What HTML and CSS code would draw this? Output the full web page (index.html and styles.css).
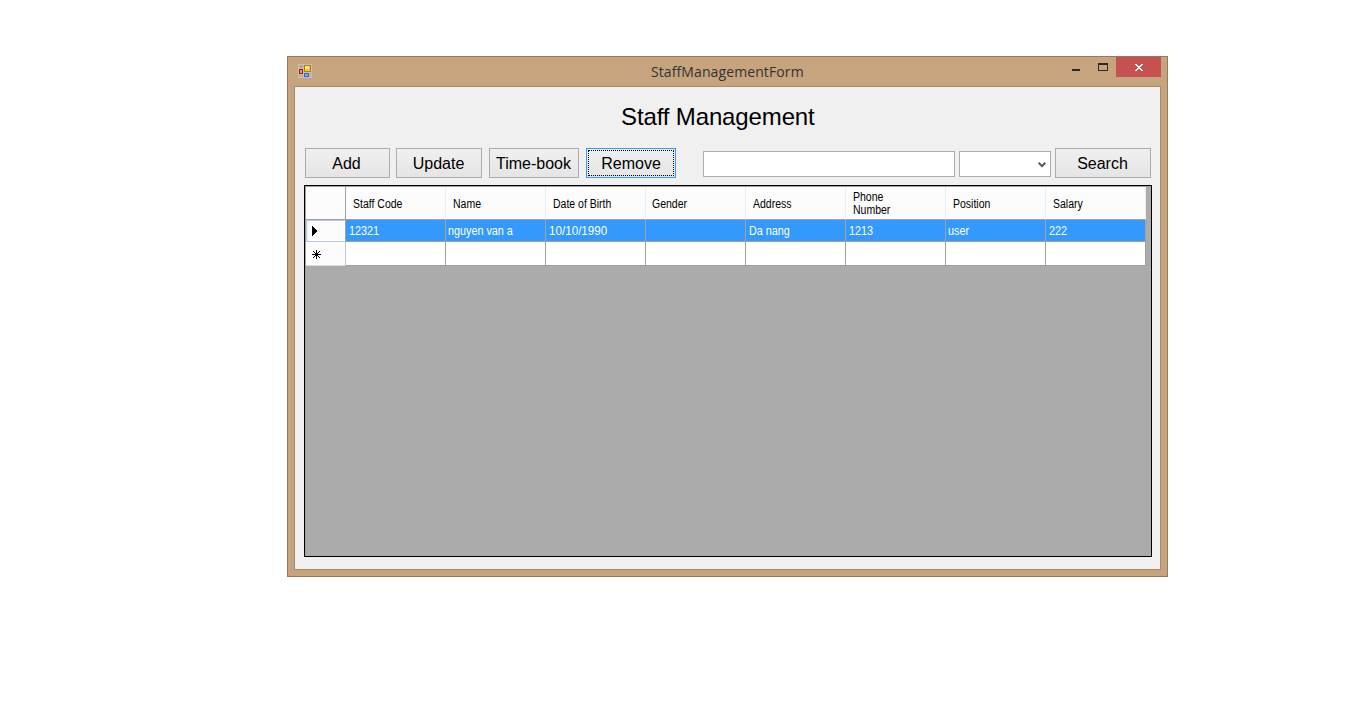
FILE: index.html
```html
<!DOCTYPE html>
<html lang="en">
<head>
<meta charset="utf-8">
<title>StaffManagementForm</title>
<link rel="stylesheet" href="styles.css">
</head>
<body>
<div class="window">
  <header class="titlebar">
    <svg class="app-icon" width="14" height="14" viewBox="0 0 14 14" shape-rendering="crispEdges">
      <path fill="#c0c0c0" fill-rule="evenodd" d="M0 0h14v14H0zM1 1v3h4V1zM1 11v2h2v-2zM4 11v2h1v-2zM12 9v4h1V9z"/>
      <path fill="#a01818" d="M1 5h4v5H1z"/><path fill="#e89088" d="M2 6h2v3H2z"/>
      <path fill="#b08008" d="M6 1h7v7H6z"/><path fill="#ffc820" d="M7 2h5v5H7z"/><path fill="#ffe880" d="M7 2h4v3H7z"/>
      <path fill="#3468c8" d="M6 9h5v4H6z"/><path fill="#78a8f0" d="M7 10h3v2H7z"/>
    </svg>
    <h1 class="caption">StaffManagementForm</h1>
    <div class="controls">
      <svg width="46" height="20" viewBox="0 0 46 20" shape-rendering="crispEdges"><path fill="#2a2a2a" d="M2 12h8v2H2z"/><path fill="#2a2a2a" fill-rule="evenodd" d="M28 6h10v8H28zM29 8v5h8V8z"/></svg>
      <svg class="close" width="45" height="20" viewBox="0 0 45 20" shape-rendering="crispEdges"><path fill="#fff" d="M19 7h2v1h1v1h2v-1h1v-1h2v1h-1v1h-1v1h-1v1h1v1h1v1h1v1h-2v-1h-1v-1h-2v1h-1v1h-2v-1h1v-1h1v-1h1v-1h-1v-1h-1v-1h-1z"/></svg>
    </div>
  </header>
  <main class="client">
    <h2 class="heading">Staff Management</h2>
    <div class="toolbar">
      <button class="btn add">Add</button>
      <button class="btn update">Update</button>
      <button class="btn timebook">Time-book</button>
      <button class="btn remove"><span class="focus">Remove</span></button>
      <input class="field" aria-label="Search text">
      <div class="combo"><svg width="8" height="6" viewBox="0 0 8 6"><path d="M.7.8 4 4.100 7.300.8" fill="none" stroke="#555" stroke-width="2"/></svg></div>
      <button class="btn search">Search</button>
    </div>
    <div class="grid">
      <div class="row head">
        <div class="marker"></div><div class="cell"><span>Staff Code</span></div><div class="cell"><span>Name</span></div><div class="cell"><span>Date of Birth</span></div><div class="cell shift"><span>Gender</span></div><div class="cell"><span>Address</span></div><div class="cell two-line"><span>Phone<br>Number</span></div><div class="cell"><span>Position</span></div><div class="cell"><span>Salary</span></div>
      </div>
      <div class="row selected">
        <div class="marker"><svg width="6" height="10" viewBox="0 0 6 10" shape-rendering="crispEdges"><path d="M0 0h1v1h1v1h1v1h1v1h1v2h-1v1h-1v1h-1v1h-1v1h-1z"/></svg></div><div class="cell"><span>12321</span></div><div class="cell shift"><span>nguyen van a</span></div><div class="cell"><span class="date">10/10/1990</span></div><div class="cell"></div><div class="cell"><span>Da nang</span></div><div class="cell"><span>1213</span></div><div class="cell shift"><span>user</span></div><div class="cell"><span>222</span></div>
      </div>
      <div class="row blank">
        <div class="marker"><svg width="9" height="9" viewBox="0 0 9 9" shape-rendering="crispEdges"><path d="M4 0h1v9h-1zM0 4h9v1H0zM1 1h1v1h-1zM2 2h1v1h-1zM3 3h3v3h-3zM6 2h1v1h-1zM7 1h1v1h-1zM2 6h1v1h-1zM1 7h1v1h-1zM6 6h1v1h-1zM7 7h1v1h-1z"/></svg></div><div class="cell"></div><div class="cell"></div><div class="cell"></div><div class="cell"></div><div class="cell"></div><div class="cell"></div><div class="cell"></div><div class="cell"></div>
      </div>
    </div>
  </main>
</div>
</body>
</html>
```
FILE: styles.css
```css
* { box-sizing: border-box; }
body { margin: 0; background: #fff; overflow: hidden; font-family: "Liberation Sans", Arial, sans-serif; color: #000; }
.window { width: 881px; height: 521px; margin: 56px 0 0 287px; padding: 0 6px 6px; background: #c5a47e; border: 1px solid #937a5b; }
.titlebar { display: flex; height: 29px; align-items: flex-start; }
.app-icon { margin: 7px 0 0 4px; flex: none; }
.caption { flex: 1; margin: 0; padding-left: 339px; font: 14px/29px "Open Sans", "Noto Sans", sans-serif; letter-spacing: .1px; color: #333; white-space: nowrap; }
.controls { display: flex; }
.controls svg { display: block; }
.controls .close { background: #c75050; }
.client { width: 867px; height: 484px; padding: 0 8px 0 9px; background: #f0f0f0; border: 1px solid #a98a66; }
.heading { margin: 0; height: 61px; padding: 15px 0 0 317px; font-weight: 400; font-size: 24px; line-height: 30px; letter-spacing: -.13px; white-space: nowrap; }
.toolbar { display: flex; height: 37px; padding-left: 1px; align-items: flex-start; }
.btn { height: 30px; padding: 2px 0 0; border: 1px solid #acacac; background: linear-gradient(#f0f0f0, #e5e5e5); font: 16px/26px "Liberation Sans", Arial, sans-serif; color: #000; white-space: nowrap; }
.add { width: 85px; padding-right: 2px; margin-right: 6px; }
.update { width: 86px; padding-right: 1px; margin-right: 7px; }
.timebook { width: 90px; margin-right: 7px; padding-right: 1px; }
.remove { width: 90px; margin-right: 27px; padding: 1px; border-color: #3399ff; }
.focus { display: block; height: 26px; padding-top: 1px; line-height: 24px; border: 1px dotted #000; }
.field { width: 252px; height: 26px; margin: 3px 4px 0 0; padding: 0; border: 1px solid #abadb3; background: #fff; }
.combo { display: flex; justify-content: flex-end; width: 92px; height: 26px; margin: 3px 4px 0 0; padding: 10px 4px 0 0; border: 1px solid #acacac; background: #fff; }
.search { width: 96px; padding-right: 1px; }
.grid { width: 848px; height: 372px; border: 1px solid #000; background: #ababab; box-shadow: inset 1px 1px #a0a0a0; padding: 1px 0 0 1px; font-size: 12px; }
.row { display: grid; grid-template-columns: 40px repeat(8, 100px); width: 840px; }
.cell, .marker { display: flex; align-items: center; border-right: 1px solid #a0a0a0; border-bottom: 1px solid #a0a0a0; white-space: nowrap; }
.cell span { transform: scaleX(.9); transform-origin: left; }
.cell .date { transform: scaleX(.97); }
.marker { background: #fcfcfc; }
.head { height: 33px; }
.head .cell { padding: 2px 0 0 7px; line-height: 13px; background: #fcfcfc; border-right-color: #e5effb; }
.head .cell span { transform: scaleX(.875); }
.head .two-line { padding-top: 1px; }
.head .shift { padding-left: 6px; }
.selected { height: 22px; }
.selected .cell { padding-left: 3px; background: #3399ff; color: #fff; }
.selected .shift { padding-left: 2px; }
.selected .marker { padding-left: 5px; border: 1px solid #bdcbe0; border-right-color: #a0a0a0; background: linear-gradient(90deg, #e8eef8, #fcfcfc 3px); }
.blank { height: 24px; }
.blank .cell { background: #fff; }
.blank .marker { padding: 2px 0 0 6px; border-right-color: #b8c8dc; border-bottom-color: #d5dbe3; }
```
